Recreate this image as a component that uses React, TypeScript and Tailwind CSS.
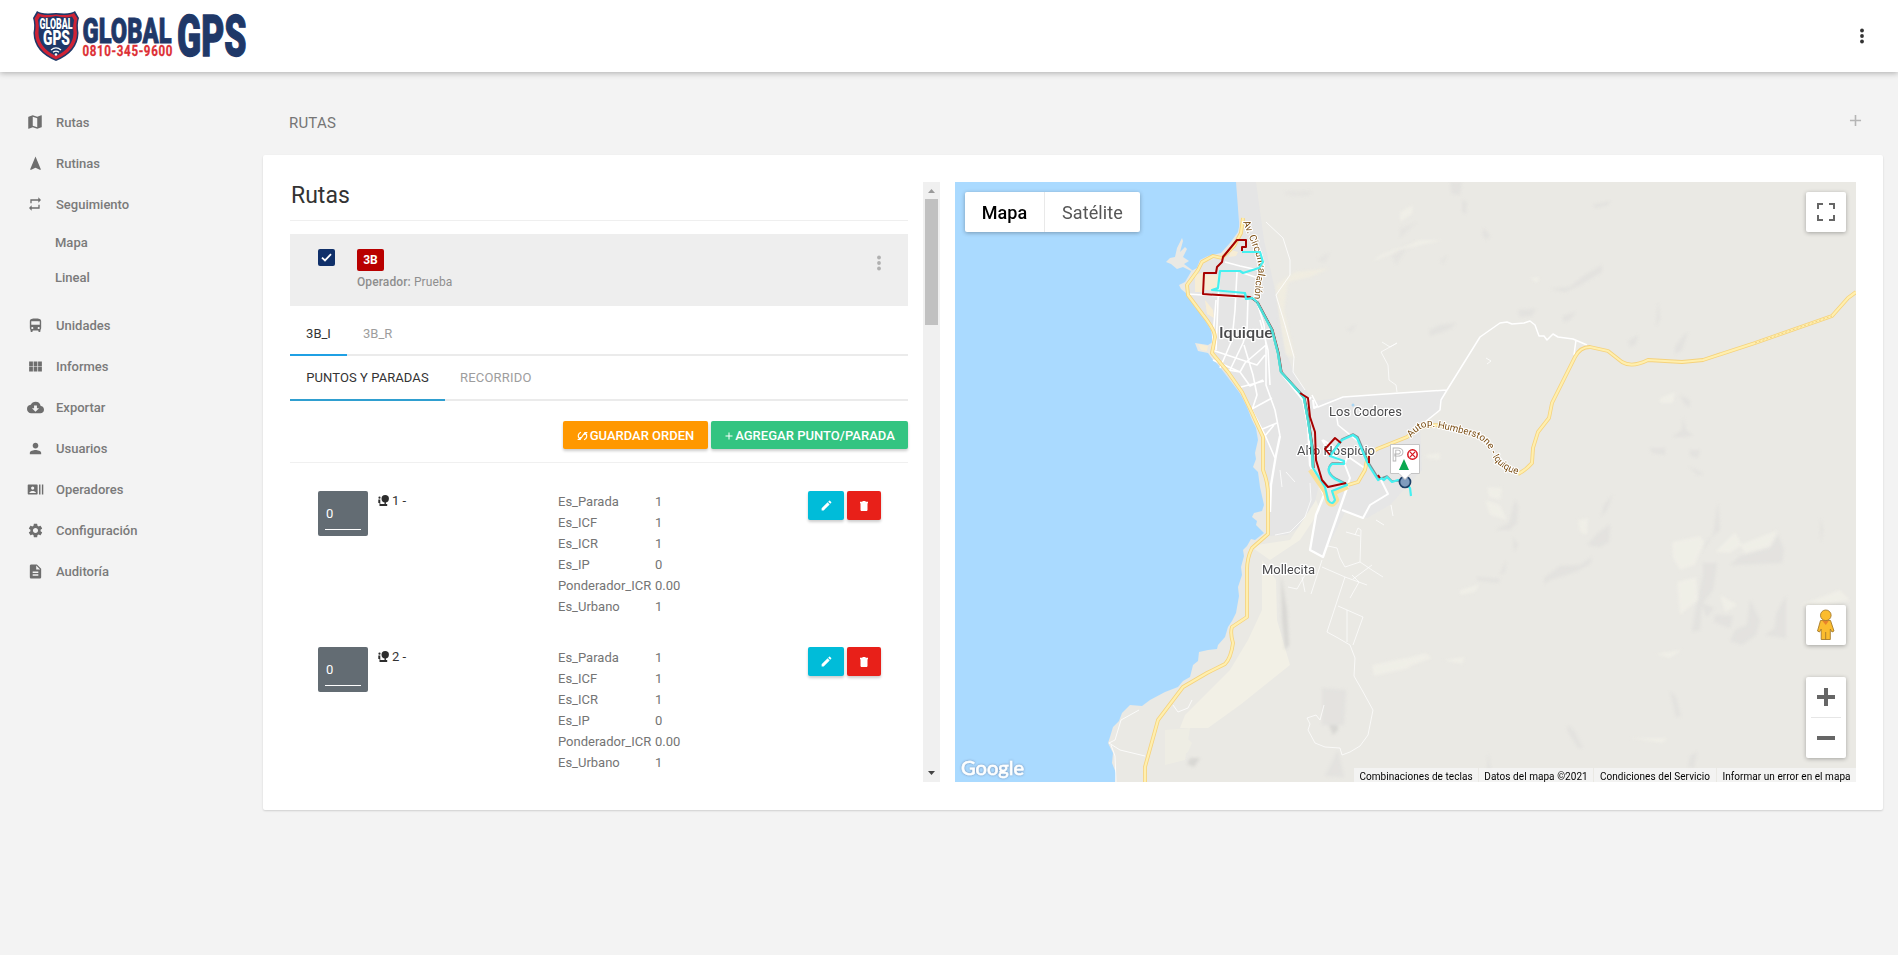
import React from "react";
import {
  MdMap, MdNavigation, MdRepeat, MdDirectionsBus, MdViewModule, MdCloudDownload, MdPerson,
  MdRecentActors, MdSettings, MdDescription, MdAdd, MdEdit,
} from "react-icons/md";
import type { IconType } from "react-icons";

type NavItem = { label: string; icon: IconType; size?: number; children?: string[] };

const nav: NavItem[] = [
  { label: "Rutas", icon: MdMap, size: 18 },
  { label: "Rutinas", icon: MdNavigation, size: 17 },
  { label: "Seguimiento", icon: MdRepeat, size: 16, children: ["Mapa", "Lineal"] },
  { label: "Unidades", icon: MdDirectionsBus, size: 17 },
  { label: "Informes", icon: MdViewModule, size: 17 },
  { label: "Exportar", icon: MdCloudDownload, size: 17 },
  { label: "Usuarios", icon: MdPerson, size: 17 },
  { label: "Operadores", icon: MdRecentActors, size: 17 },
  { label: "Configuración", icon: MdSettings, size: 17 },
  { label: "Auditoría", icon: MdDescription, size: 17 },
];

const props: [string, string][] = [
  ["Es_Parada", "1"],
  ["Es_ICF", "1"],
  ["Es_ICR", "1"],
  ["Es_IP", "0"],
  ["Ponderador_ICR", "0.00"],
  ["Es_Urbano", "1"],
];

function Logo() {
  return (
    <svg width="216" height="54" viewBox="32 10 216 54" fontFamily="Roboto" fontWeight="900" className="overflow-visible">
      <path d="M37 12 Q41 15.5 56 14 Q71 15.5 75 12 L79 19 Q77 25 78.500 34 Q78 53 56 62 Q34 53 33.500 34 Q35 25 33 19Z" fill="#1f3868" />
      <path d="M38 14 Q43 17 56 15.500 Q69 17 74 14 L77.500 19.500 Q75.500 25 77 34 Q76.500 51.500 56 60.500 Q35.500 51.500 35 34 Q36.500 25 34.500 19.500Z" fill="#cf2336" />
      <path d="M40 17.500 Q46 19.500 56 17 Q66 19.500 72 17.500 L74 21 Q72.500 27 73.500 34 Q73 49 56 57 Q39 49 38.500 34 Q39.500 27 38 21Z" fill="#1f3868" />
      <g fill="#fff">
        <text x="39.500" y="30.300" fontSize="14.500" textLength="33" lengthAdjust="spacingAndGlyphs">GLOBAL</text>
        <text x="43" y="46.300" fontSize="20" textLength="27" lengthAdjust="spacingAndGlyphs">GPS</text>
        <circle cx="56" cy="55.500" r="1.300" />
      </g>
      <path d="M53 53.300 Q56 50.800 59 53.300 M51 51 Q56 46.800 61 51" fill="none" stroke="#fff" strokeWidth="1.300" />
      <g fill="#1f3868" stroke="#1f3868">
        <text x="82.500" y="44.300" fontSize="35.500" strokeWidth="0.900" textLength="89" lengthAdjust="spacingAndGlyphs">GLOBAL</text>
        <text x="177" y="56.500" fontSize="56.500" strokeWidth="1.300" textLength="69.500" lengthAdjust="spacingAndGlyphs">GPS</text>
      </g>
      <text x="82.500" y="57" fontSize="14" fontWeight="700" letterSpacing="0.800" fill="#dd2f35" stroke="#dd2f35" strokeWidth="0.300" textLength="90.500" lengthAdjust="spacingAndGlyphs">0810-345-9600</text>
    </svg>
  );
}

function Dots({ className }: { className: string }) {
  return (
    <svg width="4" height="16" viewBox="0 0 4 16" className={className} fill="currentColor">
      <circle cx="2" cy="2.500" r="1.900" /><circle cx="2" cy="8" r="1.900" /><circle cx="2" cy="13.500" r="1.900" />
    </svg>
  );
}

function Sidebar() {
  return (
    <aside className="w-[263px] shrink-0 pt-[30px] text-[13px] font-medium text-[#7a7a7a]">
      {nav.map(({ label, icon: Icon, size, children }) => (
        <div key={label}>
          <div className="flex h-[41px] items-center pl-[26px]">
            <span className="mb-px mr-3 flex w-[18px] justify-center"><Icon size={size} color="#6e6e6e" /></span>
            <span>{label}</span>
          </div>
          {children && (
            <div className="mb-[10px] h-[70px] pl-[55px]">
              {children.map((c) => <div key={c} className="flex h-[35px] items-center">{c}</div>)}
            </div>
          )}
        </div>
      ))}
    </aside>
  );
}

function Stop({ n }: { n: number }) {
  return (
    <div className="flex h-[156px] pl-7">
      <div className="flex h-[45px] w-[50px] shrink-0 flex-col justify-end rounded-xs bg-[#636c73] px-[7px] pb-[6px] text-white">
        <span className="pb-[4px] pl-px text-[13px] leading-[22px]">0</span>
        <span className="h-px bg-white" />
      </div>
      <div className="ml-[10px] flex h-[19px] w-[181px] shrink-0 items-center gap-[3px] text-[13px] text-[#333]">
        <svg width="11" height="11" viewBox="0 0 11 11" fill="#2d2d2d">
          <circle cx="7.200" cy="3.700" r="3.700" />
          <path d="M6.500 6.500h1.400V9h1.300v2H1.500V8H.3V4.500h2V9h4.200z" />
          <circle cx="1.500" cy="2.700" r="1.100" />
        </svg>
        <span>{n} -</span>
      </div>
      <div className="-ml-px w-[250px] shrink-0 text-[13px] leading-[21px] text-[#747474]">
        {props.map(([k, v]) => (
          <div key={k} className="flex"><span className="w-[97px]">{k}</span><span>{v}</span></div>
        ))}
      </div>
      <button className="mr-[3px] flex h-[29px] w-9 shrink-0 items-center justify-center rounded-xs bg-[#00bcd9] text-white shadow-[0_2px_3px_rgba(0,0,0,0.2)]"><MdEdit size={13} /></button>
      <button className="flex h-[29px] w-[34px] shrink-0 items-center justify-center rounded-xs bg-[#e82019] text-white shadow-[0_2px_3px_rgba(0,0,0,0.2)]">
        <svg width="8" height="10" viewBox="0 0 8 10" fill="#fff"><path d="M2.500 0h3v.8H8v1.500h-.5V9.200L6.800 10H1.200L.5 9.200V2.300H0V.8h2.500z" /></svg>
      </button>
    </div>
  );
}

function RoutesPanel() {
  return (
    <div className="flex h-[600px] w-[650px] shrink-0 overflow-hidden">
      <div className="w-[618px] shrink-0">
        <h2 className="h-[39px] border-b border-[#efefef] pl-px text-[23px] leading-[27px] text-[#333]">Rutas</h2>
        <div className="mt-[13px] flex h-[72px] bg-[#eee] px-7 pt-[15px]">
          <span className="flex h-[17px] w-[17px] items-center justify-center rounded-xs bg-[#10306a]">
            <svg width="11" height="9" viewBox="0 0 11 9" fill="none" stroke="#fff" strokeWidth="1.800"><path d="M1 4.600 4 7.400 10 1.200" /></svg>
          </span>
          <div className="ml-[22px] grow">
            <span className="flex h-[22px] w-[27px] items-center justify-center rounded-xs bg-[#b90000] text-[12px] font-bold text-white">3B</span>
            <p className="pt-[2px] text-[12px] leading-[18px] tracking-[0.1px] text-[#8e8e8e]"><b className="font-medium">Operador:</b> Prueba</p>
          </div>
          <Dots className="-mr-px mt-[6px] text-[#b0b0b0]" />
        </div>
        <div className="mt-2 flex h-[42px] border-b-2 border-[#ebebeb] text-[13px] text-[#9d9d9d]">
          <span className="h-[42px] w-[57px] border-b-2 border-[#1fa0e4] text-center leading-10 text-[#333]">3B_I</span>
          <span className="pl-4 leading-10">3B_R</span>
        </div>
        <div className="flex h-[45px] border-b-2 border-[#ebebeb] text-[13px] text-[#9d9d9d]">
          <span className="h-[45px] w-[155px] border-b-2 border-[#2f9fd0] text-center leading-[44px] tracking-[0.08px] text-[#333]">PUNTOS Y PARADAS</span>
          <span className="pl-[15px] leading-[44px] tracking-[0.2px]">RECORRIDO</span>
        </div>
        <div className="flex h-[62px] justify-end gap-[3px] border-b border-[#f0f0f0] pt-5 text-[13px] font-medium text-white">
          <button className="flex h-7 w-[145px] items-center justify-center gap-[2px] rounded-xs bg-[#ff9800] pt-px shadow-[0_2px_3px_rgba(0,0,0,0.2)]">
            <svg width="11" height="10" viewBox="0 0 11 10" fill="none" stroke="#fff" strokeWidth="1.200">
              <path d="M4 1.200 A4 4 0 0 0 2.600 8 M.6 8.500h2.600V6 M7 8.800 A4 4 0 0 0 8.400 2 M10.400 1.500H7.800V4 M3.800 7.500 L7.200 2.500" />
            </svg>
            GUARDAR ORDEN
          </button>
          <button className="flex h-7 w-[197px] items-center justify-center rounded-xs bg-[#33c481] pr-px pt-px tracking-[0.03px] shadow-[0_2px_3px_rgba(0,0,0,0.2)]"><MdAdd size={12} />AGREGAR PUNTO/PARADA</button>
        </div>
        <div className="pt-7"><Stop n={1} /><Stop n={2} /></div>
      </div>
      <div className="ml-[15px] flex h-[600px] w-[17px] flex-col items-center bg-[#f0f0f0]">
        <svg width="17" height="17" viewBox="0 0 17 17"><path d="M5 11h7L8.500 7z" fill="#9a9a9a" /></svg>
        <div className="h-[126px] w-[13px] bg-[#c1c1c1]" />
        <div className="grow" />
        <svg width="17" height="17" viewBox="0 0 17 17"><path d="M5 6h7L8.500 10z" fill="#444" /></svg>
      </div>
    </div>
  );
}

const coastRoad =
  "M1243 218 L1241 233 L1234 246 L1222 258 L1213 256 L1202 262 L1198 270 L1187 285 L1188 295 L1203 315 Q1215 330 1215 337 L1212 353 L1228 372 L1242 392 L1253 415 L1263 437 L1263 470 Q1268 482 1268 495 V534 L1252 548 Q1247 558 1247 570 V617 L1232 627 Q1230 633 1233 643 Q1231 658 1225 664 L1207 673 L1183 687 L1158 720 L1145 767 V782";
const highway =
  "M1518 474 Q1526 470 1532 463 L1533 448 L1538 432 L1549 418 L1552 403 L1565 377 L1575 357 Q1580 347 1590 347 L1608 351 L1622 362 Q1632 368 1648 360 L1682 362 L1703 360 L1755 343 L1832 316 L1848 298 L1856 292";
const autop = "M1348 485 L1358 482 L1365 470 L1368 455 L1377 449 L1407 437 L1419 428 Q1432 423 1450 427";
const sharedRoute =
  "L1265 317 L1272 330 L1278 353 L1281 372 L1300 393 L1304 398 L1308 420 L1312 447 L1313 468";
const cyanRoute =
  "M1242 252 H1260 L1263 262 L1259 268 L1243 273 L1240 271 H1220 L1218 288 L1212 290 L1245 293 L1246 299 L1252 298 L1257 302 " +
  sharedRoute +
  " L1325 487 L1328 500 Q1332 506 1335 500 L1332 491 L1347 485 L1335 479 Q1324 471 1332 464 L1344 464 L1344 461 L1330 456 L1342 440 L1353 435 L1357 438 L1368 464 L1378 480 L1381 478 L1384 480 L1387 477 L1392 482 L1398 480 L1404 482 L1410 488 L1411 496";
const redRoute =
  "M1242 251 V247 H1246 V240 H1237 L1223 257 L1222 262 L1217 267 L1216 273 H1204 L1203 294 L1250 297 L1257 302";
const redLower = "M1300 393 L1308 398 L1310 417 L1315 432 L1316 460 L1322 480 L1328 487 L1346 483";

const coast =
  "M1237 182 L1239 195 L1242 207 L1241 217 L1238 232 L1230 243 L1221 253 L1208 256 L1200 260 L1197 268 L1191 271 L1183 267 L1177 269 L1171 264 L1166 262 L1170 258 L1175 257 L1177 248 L1182 238 L1183 241 L1180 252 L1185 247 L1187 249 L1183 257 L1189 261 L1184 264 L1192 270 L1188 277 L1185 282 L1179 285 L1181 289 L1187 294 L1195 307 L1203 317 L1211 330 L1213 342 L1208 345 L1195 343 L1198 351 L1208 353 L1213 360 L1227 372 L1237 387 L1247 407 L1252 420 L1256 428 L1258 440 L1255 453 L1256 459 L1253 467 L1258 472 L1260 487 L1264 505 L1262 511 L1254 513 L1252 517 L1257 521 L1256 525 L1264 533 L1255 540 L1251 539 L1247 546 L1243 550 L1244 556 L1241 567 L1242 575 L1238 587 L1239 596 L1236 613 L1232 621 L1228 627 L1225 637 L1218 645 L1217 649 L1208 650 L1199 652 L1198 661 L1193 665 L1190 677 L1183 681 L1178 687 L1165 692 L1150 700 L1142 706 L1130 705 L1122 713 L1119 721 L1113 727 L1110 737 L1108 743 L1113 753 L1112 763 L1116 773 L1115 782 H1856 V182Z";

function MapCanvas() {
  return (
    <svg width="901" height="600" viewBox="955 182 901 600" className="block" fontFamily="Roboto">
      <defs>
        <filter id="soft"><feGaussianBlur stdDeviation="0.700" /></filter>
        <filter id="relief"><feGaussianBlur stdDeviation="1.500" /></filter>
        <filter id="shade" x="-10%" y="-20%" width="120%" height="140%"><feDropShadow dx="0" dy="0" stdDeviation="1" floodColor="#446" floodOpacity="0.550" /></filter>
        <path id="humber" d="M1411 438 Q1422 424 1434 427 Q1460 432 1474 437 Q1486 441 1490 451 Q1496 468 1516 474 L1526 477" />
        <path id="circ" d="M1243 222 L1253 247 Q1262 268 1256 280 L1254 302" />
      </defs>
      <rect x="955" y="182" width="901" height="600" fill="#aadaff" />
      <path d={coast} fill="#eae9e4" />
      <g filter="url(#soft)">
        <path d="M1236 182 H1256 L1264 240 L1275 290 L1285 350 L1296 378 L1312 398 L1322 430 L1324 450 L1321 478 L1310 520 L1287 535 L1268 536 V490 L1262 440 L1245 400 L1213 358 L1215 335 L1189 296 V284 L1204 262 L1222 258 L1240 235Z" fill="#e5e5e5" />
        <path d="M1308 402 L1343 397 L1447 390 L1438 412 L1420 425 L1422 470 L1390 505 L1367 518 L1345 512 L1323 557 L1310 550 L1318 510 L1330 495 L1316 460Z" fill="#e6e6e6" />
        <path d="M1262 560 L1276 580 L1277 620 L1290 665 L1240 705 L1208 728 L1180 728 L1185 715 L1230 670 L1248 640 L1262 610Z M1250 546 L1290 540 L1316 500 L1320 510 L1300 540 L1270 560Z" fill="#f2f0e6" />
        <path d="M1195 275 L1204 272 V292 L1195 292Z M1205 300 L1213 310 L1214 318 L1207 314Z M1231 250 L1238 252 L1236 256 L1229 257Z M1204 275 H1218 V290 H1204Z M1198 344 L1208 346 L1207 351 L1201 350Z" fill="#faefd2" opacity="0.850" />
        <path d="M1184 735 L1192 743 L1188 752 L1178 758 L1178 748Z M1165 730 L1190 728 L1185 760 L1165 765Z" fill="#eeede4" />
      </g>
      <path d="M1276 285 L1295 272 L1330 268 L1310 277 L1288 282 L1284 310 L1295 358 L1286 355 L1280 320Z" fill="#f2eee0" opacity="0.800" filter="url(#relief)" />
      <g fill="#dedddb" opacity="0.550" filter="url(#relief)">
        <path d="M1281 575 L1287 610 L1289 645 L1285 650 L1282 620Z M1331 690 L1336 697 L1338 730 L1333 735 L1327 720Z M1190 758 L1200 758 L1194 767 L1187 764Z" fill="#cbcac8" />
        <path d="M1322 688 L1346 690 L1344 725 L1322 725Z M1338 750 L1344 777 L1325 776Z" />
        <path d="M1450 182 H1462 L1460 195 L1452 194Z M1462 200 L1467 202 L1466 214 L1462 212Z M1484 228 L1490 236 L1486 240 L1482 234Z M1550 289 L1570 287 L1585 275 L1602 265 L1602 272 L1582 284 L1565 292Z M1593 205 L1610 201 L1608 205 L1595 208Z M1518 310 L1536 309 L1532 316 L1520 317Z M1563 316 L1576 312 L1570 320 L1563 322Z M1430 330 L1440 325 L1456 323 L1450 329 L1430 336Z M1658 302 L1660 318 L1656 327Z M1628 341 L1638 335 L1636 344 L1630 347Z M1684 335 L1688 332 L1682 350 L1675 354 L1675 347Z M1680 395 L1690 400 L1690 407 L1684 404Z M1683 417 L1686 430 L1693 435 L1685 437 L1672 437 L1682 430Z M1650 448 L1665 448 L1665 455 L1652 453Z M1690 450 L1700 450 L1698 458 L1690 456Z M1688 466 L1704 474 L1698 475Z" />
        <path d="M1515 500 L1518 505 L1517 523 L1510 530 L1495 530 L1509 523Z M1513 537 L1518 545 L1514 552Z M1506 560 L1505 572 L1500 575Z M1477 577 L1500 579 L1498 583 L1477 580Z M1613 494 L1607 510 L1601 517 L1604 505Z M1610 524 L1609 542 L1600 547 L1587 545 L1598 533Z M1592 557 L1590 564 L1575 572 L1550 580 L1545 584 L1544 578 L1560 566 L1580 565Z M1718 502 L1720 530 L1712 537 L1702 552 L1706 542 L1713 535Z M1778 535 L1784 550 L1782 563 L1730 565 L1740 556 L1770 548Z M1703 563 L1717 563 L1713 590 L1702 604 L1700 630 L1692 632 L1697 602 L1703 575Z M1700 602 L1714 608 L1707 617Z M1715 615 L1733 616 L1730 628 L1714 622Z M1750 600 L1760 620 L1756 635 L1742 645 L1730 641 L1735 630 L1747 625Z M1786 596 L1786 638 L1765 635 L1775 628 L1776 614Z M1820 517 L1823 530 L1821 543Z M1568 725 L1575 732 L1583 748 L1578 748 L1567 730Z M1670 691 L1676 697 L1681 716 L1676 717Z M1488 753 L1491 770 L1487 770Z M1690 756 L1697 752 L1694 768 L1688 767Z" />
        <path d="M1396 265 L1406 250 L1416 242 L1402 246 L1392 256Z M1400 238 L1417 222 L1400 229Z M1284 192 L1312 191 L1308 196 L1288 195Z M1440 260 L1448 255 L1443 264Z M1346 330 L1356 324 L1352 332Z M1428 330 L1452 324 L1435 334Z M1317 260 L1330 252 L1325 262Z" opacity="0.700" />
      </g>
      <g fill="#f1f0e8" opacity="0.800" filter="url(#relief)">
        <path d="M1380 255 L1420 240 L1443 240 L1400 250 L1372 262Z M1400 212 L1413 205 L1412 214 L1400 222Z M1672 542 L1700 536 L1704 542 L1695 565 L1680 570 L1673 558Z M1740 545 L1765 535 L1778 530 L1770 546 L1745 553Z M1735 532 L1742 545 L1730 553 L1715 552Z M1677 582 L1696 577 L1698 600 L1680 615Z M1720 595 L1738 605 L1725 612Z M1400 660 L1425 653 L1432 658 L1410 666Z M1443 660 L1465 657 L1462 664Z M1655 654 L1682 650 L1670 658Z M1485 500 L1500 505 L1507 520 L1490 515Z M1487 487 L1502 488 L1500 500 L1489 497Z M1578 520 L1588 518 L1587 535 L1580 532Z M1460 590 L1480 584 L1475 592 L1460 595Z M1630 738 L1668 738 L1662 743Z M1660 398 L1675 392 L1673 403 L1660 403Z M1530 278 L1540 277 L1537 283Z M1800 605 L1840 590 L1850 600 L1820 606Z M1425 455 L1440 453 L1440 460 L1428 458Z M1372 665 L1405 658 L1410 668 L1374 676Z" />
      </g>
      <g fill="none" stroke="#fff" strokeLinejoin="round">
        <g strokeWidth="1.600">
          <path d="M1187 294 L1250 298 M1220 271 L1218 300 L1216 350 M1237 272 L1235 310 L1232 340 L1220 368 M1248 297 L1247 330 L1243 343 L1230 370 M1216 300 L1212 350 L1257 365 L1265 355 M1225 262 L1240 266 L1258 270 M1243 273 L1258 278 M1257 302 L1264 325 L1266 345 L1266 385 L1275 410 L1280 436 M1260 320 L1268 350 L1270 385 M1228 370 L1240 372 L1250 386 L1263 380 M1241 387 L1264 381 M1250 410 L1272 398 M1260 430 L1277 423 M1244 345 L1253 375 L1257 395 L1252 410 L1265 435 L1275 458 M1213 360 L1240 372 L1245 363 L1266 345 M1264 437 L1274 425" />
        </g>
        <path d="M1280 436 L1276 455 L1271 485 L1270 512 M1283 375 L1303 400 L1308 425 L1310 465 L1324 495 L1316 515 L1310 550 L1323 557 L1348 485" strokeWidth="2.300" />
        <path d="M1312 395 L1318 407 L1343 397 L1400 393 L1447 390 L1480 337 L1500 323 L1507 322 L1512 324 L1524 323 L1530 321 L1535 325 L1539 336 L1544 336 L1547 340 L1553 334 L1558 337 L1573 339 L1587 345 M1576 340 L1574 355 M1447 390 L1441 400 L1440 410 L1425 422 M1336 412 L1338 425 L1360 443" strokeWidth="1.500" />
        <path d="M1342 510 L1363 518 L1370 505 L1388 494 L1381 480 M1323 440 L1350 458 L1366 469 M1322 440 L1330 452 L1345 465 L1350 478 L1346 490 M1345 463 L1348 455" strokeWidth="2" />
        <path d="M1311 397 L1307 403 M1313 400 L1314 408 L1318 406" strokeWidth="2" />
        <path d="M1266 222 L1283 238 L1290 260 L1290 275 L1276 295 L1285 325 L1294 357 L1293 372 L1305 390" strokeWidth="0.900" opacity="0.900" />
        <path d="M1382 342 L1390 347 L1397 343 L1381 352 L1388 365 L1389 380 L1396 385 L1397 392 M1275 535 L1290 532 L1305 517 L1311 500 L1310 483 M1328 546 L1337 548 L1340 558 L1345 567 L1360 562 L1361 530 L1358 528 L1355 535 M1346 532 L1360 536 M1322 567 L1345 577 L1367 585 M1322 560 L1311 594 M1345 577 L1327 632 L1338 638 L1350 645 L1355 658 L1354 676 L1362 690 L1373 710 L1368 735 L1360 746 L1350 752 L1342 755 L1340 748 L1325 747 L1315 743 L1308 730 L1310 724 L1307 718 L1316 715 L1320 720 L1324 705 M1338 606 L1363 617 L1353 645 M1347 610 V642 M1360 562 L1372 570 L1383 577 M1352 575 L1359 582 L1350 598 M1353 579 L1372 565 M1305 575 L1297 589 L1288 587 M1302 577 L1305 592" strokeWidth="0.800" opacity="0.900" />
        <path d="M1139 710 L1121 720 L1115 740 L1109 743 L1120 750 L1145 756 M1111 745 L1115 756 L1116 782 M1173 705 L1178 712 L1188 708 L1192 700" strokeWidth="0.900" opacity="0.900" />
        <path d="M1486 358 L1491 361 L1487 364 M1391 505 L1393 516 M1376 520 L1384 525 M1280 470 L1282 487 M1286 472 L1295 482" strokeWidth="0.800" />
      </g>
      <g fill="none" strokeLinejoin="round">
        <g stroke="#f5d27c" strokeWidth="3.800"><path d={coastRoad} /><path d={highway} /><path d={autop} /></g>
        <g stroke="#ffefae" strokeWidth="2.200"><path d={coastRoad} /><path d={highway} /><path d={autop} /></g>
        <path d="M1755 343 L1832 316" stroke="#eac36b" strokeWidth="0.700" strokeDasharray="2 2" />
        <path d="M1310 470 L1325 492 L1328 502 Q1332 508 1337 500 L1334 493 L1348 487" stroke="#f9e09a" strokeWidth="4.500" />
      </g>
      <g fill="#4a4a4c" stroke="#fff" strokeWidth="2.500" strokeLinejoin="round" paintOrder="stroke">
        <text x="1219" y="338" fontSize="15.500" fontWeight="500" textLength="54" lengthAdjust="spacingAndGlyphs">Iquique</text>
        <text x="1329" y="416" fontSize="13" textLength="73">Los Codores</text>
        <text x="1297" y="455" fontSize="13" textLength="78">Alto Hospicio</text>
        <text x="1262" y="574" fontSize="13" textLength="53">Mollecita</text>
      </g>
      <g fill="#7b4d12" stroke="#fff" strokeWidth="2.200" strokeLinejoin="round" paintOrder="stroke">
        <text fontSize="9.800" letterSpacing="-0.100"><textPath href="#humber">Autop. Humberstone - Iquique</textPath></text>
        <text fontSize="10"><textPath href="#circ" textLength="80">Av. Circunvalación</textPath></text>
      </g>
      <circle cx="1353" cy="405" r="1.500" fill="#a8d4f2" />
      <g fill="none" strokeLinejoin="round">
        <path d={"M1257 302 " + sharedRoute} stroke="#7c2020" strokeWidth="1.600" transform="translate(0.800 0)" />
        <path d={"M1257 302 " + sharedRoute} stroke="#35585f" strokeWidth="1.600" transform="translate(-0.500 -0.500)" opacity="0.600" />
        <path d="M1347 484 L1335 478 Q1324 470 1332 463 L1344 463 M1330 455 L1342 439 L1353 434 L1358 437 L1369 463 L1379 479 L1387 476 L1392 481 L1404 481" stroke="#35585f" strokeWidth="1.600" opacity="0.600" />
        <path d={cyanRoute} stroke="#45f0f0" strokeWidth="2.200" />
        <path d={"M1257 302 " + sharedRoute} stroke="#52ddd5" strokeWidth="2.200" />
        <path d={redRoute} stroke="#a60000" strokeWidth="2" />
        <path d={redLower} stroke="#a60000" strokeWidth="2" />
        <path d="M1242 252 H1260 M1245 293 L1246 299 L1252 298 L1257 302" stroke="#45f0f0" strokeWidth="2" />
        <path d="M1330 455 L1325 449 L1335 438 L1341 443 M1369 456 V463 M1378 475 L1380 478" stroke="#a60000" strokeWidth="1.900" />
      </g>
      <circle cx="1405" cy="482" r="5.500" fill="#7f9bbd" stroke="#1e3f67" strokeWidth="1.700" />
      <path d="M1390.500 444.500 H1419.500 V473.500 H1411 L1405 479.500 L1399 473.500 H1390.500Z" fill="#fff" stroke="#c5c5c5" strokeWidth="1" />
      <text x="1392" y="460.500" fontSize="18" fontWeight="700" fill="#fff" stroke="#b8b8b8" strokeWidth="0.900">P</text>
      <g fill="none" stroke="#d8141c"><circle cx="1412.500" cy="454.500" r="4.700" strokeWidth="1.500" /><path d="M1409.700 451.700 l5.600 5.600 M1415.300 451.700 l-5.600 5.600" strokeWidth="1.200" /></g>
      <path d="M1404 459 L1409 470 H1399Z" fill="#0aa84f" />
      <text x="961" y="774.500" fontSize="20" fontWeight="400" fontFamily="Lato, Roboto, sans-serif" fill="#fff" stroke="#fff" strokeWidth="0.600" filter="url(#shade)" textLength="63" lengthAdjust="spacingAndGlyphs">Google</text>
    </svg>
  );
}

function MapPanel() {
  return (
    <div className="relative h-[600px] w-[901px] shrink-0">
      <MapCanvas />
      <div className="absolute left-[10px] top-[10px] flex h-10 w-[175px] rounded-xs bg-white text-[18px] leading-[41px] shadow-[0_1px_4px_rgba(0,0,0,0.3)]">
        <span className="w-20 border-r border-[#e9e9e9] text-center font-medium text-black">Mapa</span>
        <span className="grow text-center tracking-[0.1px] text-[#565656]">Satélite</span>
      </div>
      <div className="absolute right-[10px] top-[10px] flex h-10 w-10 items-center justify-center rounded-xs bg-white shadow-[0_1px_4px_rgba(0,0,0,0.3)]">
        <svg width="18" height="18" viewBox="0 0 18 18" fill="#666"><path d="M0 0v6h2V2h4V0zM16 0h-4v2h4v4h2V0zM16 16h-4v2h6v-6h-2zM2 12H0v6h6v-2H2z" /></svg>
      </div>
      <div className="absolute right-[10px] top-[423px] flex h-10 w-10 items-center justify-center rounded-xs bg-white shadow-[0_1px_4px_rgba(0,0,0,0.3)]">
        <svg width="18" height="32" viewBox="0 0 18 32" fill="#fbbc2e" stroke="#a57a2c" strokeWidth="0.900">
          <path d="M3.500 11.500 H13.500 L17 22 L15 23 L13.300 20 V30.500 H4.200 V20 L2.500 23 L.5 22Z" />
          <path d="M8.700 30.500V23" />
          <path d="M5 11.500 H12 L8.800 16Z" fill="#e8822b" stroke="none" />
          <circle cx="8.800" cy="6.300" r="5.300" />
        </svg>
      </div>
      <div className="absolute right-[10px] top-[495px] flex h-[81px] w-10 flex-col items-center rounded-xs bg-white shadow-[0_1px_4px_rgba(0,0,0,0.3)]">
        <svg width="40" height="40" viewBox="0 0 40 40" fill="#666"><path d="M18 11h4v7h7v4h-7v7h-4v-7h-7v-4h7z" /></svg>
        <div className="h-px w-[30px] bg-[#e6e6e6]" />
        <svg width="40" height="40" viewBox="0 0 40 40" fill="#666"><path d="M11 18h18v4H11z" /></svg>
      </div>
      <div className="absolute bottom-0 right-0 flex h-[14px] gap-px whitespace-nowrap text-[10px] leading-[17px] tracking-[0.05px] text-black">
        <span className="h-[14px] w-[124px] bg-[#f5f5f5]/80 text-center">Combinaciones de teclas</span>
        <span className="h-[14px] w-[114px] bg-[#f5f5f5]/80 text-center">Datos del mapa ©2021</span>
        <span className="h-[14px] w-[122px] bg-[#f5f5f5]/80 text-center">Condiciones del Servicio</span>
        <span className="h-[14px] w-[139px] bg-[#f5f5f5]/80 text-center">Informar un error en el mapa</span>
      </div>
    </div>
  );
}

export default function App() {
  return (
    <div className="h-[955px] w-[1898px] overflow-hidden bg-[#f3f3f3] font-['Roboto',sans-serif]">
      <header className="relative flex h-[72px] items-center justify-between bg-white pl-8 pr-[34px] shadow-[0_1px_6px_rgba(0,0,0,0.3)]">
        <Logo />
        <Dots className="text-[#333]" />
      </header>
      <div className="flex">
        <Sidebar />
        <main className="w-[1620px]">
          <div className="flex h-[83px] items-center justify-between pl-[26px] pr-[18px] pt-[19px] text-[#757575]">
            <h1 className="text-[15px] leading-5 tracking-[0.2px]">RUTAS</h1>
            <MdAdd size={19} className="mb-[6px] text-[#b5b5b5]" />
          </div>
          <section className="flex h-[655px] justify-between rounded-xs bg-white pl-[27px] pr-[27px] pt-[27px] shadow-[0_1px_2px_rgba(0,0,0,0.15)]">
            <RoutesPanel />
            <MapPanel />
          </section>
        </main>
      </div>
    </div>
  );
}
